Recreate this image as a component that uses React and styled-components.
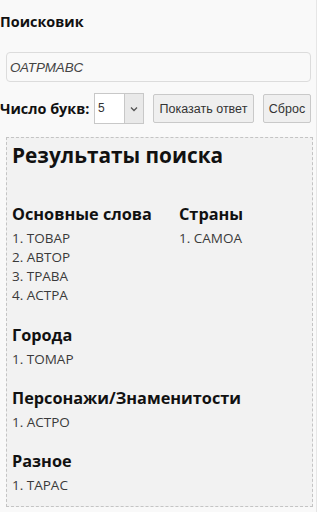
import React from "react";
import styled, { createGlobalStyle } from "styled-components";

const Global = createGlobalStyle`
  html, body { margin: 0; padding: 0; background: #ffffff; }
  body { font-family: "Open Sans", "Liberation Sans", sans-serif; }
`;

const Page = styled.div`
  width: 317px;
  min-height: 512px;
  background: #f9f9f9;
  border-right: 1px solid #e6e6e6;
  box-sizing: border-box;
  padding: 12px 0 0 0;
`;

const Title = styled.h1`
  margin: 0;
  font-size: 14.4px;
  font-weight: 700;
  color: #111;
  line-height: 20px;
`;

const SearchInput = styled.input`
  display: block;
  box-sizing: border-box;
  width: 305px;
  height: 30px;
  margin: 20px 0 0 6px;
  padding: 0 3px;
  border: 1px solid #dcdcdc;
  border-radius: 4px;
  background: #f9f9f9;
  font-family: "Liberation Sans", Arial, sans-serif;
  font-style: italic;
  font-size: 13.4px;
  color: #444;
  outline: none;
`;

const Controls = styled.div`
  display: flex;
  align-items: center;
  margin-top: 11px;
  height: 31px;
`;

const Label = styled.span`
  width: 94px;
  font-size: 14.4px;
  font-weight: 700;
  color: #111;
  white-space: nowrap;
`;

const Select = styled.div`
  display: flex;
  box-sizing: border-box;
  width: 50px;
  height: 31px;
  border: 1px solid #c8c8c8;
  background: #fff;
  margin-right: 9px;
`;

const SelectValue = styled.span`
  flex: 1;
  padding-left: 3px;
  font-family: "Liberation Sans", Arial, sans-serif;
  font-size: 12px;
  line-height: 29px;
  color: #333;
`;

const SelectArrow = styled.span`
  width: 18px;
  display: flex;
  align-items: center;
  justify-content: center;
  background: #e9e9e9;
  border-left: 1px solid #c8c8c8;
`;

const Button = styled.button`
  box-sizing: border-box;
  height: 29px;
  width: ${(p) => p.$w}px;
  padding: 0;
  margin-right: ${(p) => p.$gap || 0}px;
  border: 1px solid #c9c9c9;
  border-radius: 2px;
  background: #efefef;
  font-family: "Liberation Sans", Arial, sans-serif;
  font-size: 12.5px;
  color: #333;
  cursor: pointer;
`;

const Results = styled.section`
  box-sizing: border-box;
  width: 307px;
  margin: 13px 0 0 6px;
  padding: 3px 5px 11px 5px;
  border: 1px dashed #c4c4c4;
  background: #f2f2f2;
`;

const ResultsTitle = styled.h2`
  margin: 0;
  font-size: 20.8px;
  font-weight: 700;
  color: #111;
  line-height: 28px;
`;

const Columns = styled.div`
  display: grid;
  grid-template-columns: 167px 1fr;
  margin-top: 33px;
  margin-bottom: 18px;
`;

const Group = styled.div`
  margin-bottom: ${(p) => p.$mb ?? 17}px;
`;

const GroupTitle = styled.h3`
  margin: 0 0 3px 0;
  font-size: 16.3px;
  font-weight: 700;
  color: #111;
  line-height: 24px;
`;

const List = styled.ol`
  margin: 0;
  padding: 0;
  list-style: none;
`;

const Item = styled.li`
  font-size: 13.5px;
  line-height: 19px;
  color: #3a3a3a;
`;

const Chevron = () => (
  <svg width="8" height="6" viewBox="0 0 8 6">
    <path d="M1 1.5 L4 4.5 L7 1.5" fill="none" stroke="#555" strokeWidth="1.3" />
  </svg>
);

const groups = {
  main: ["ТОВАР", "АВТОР", "ТРАВА", "АСТРА"],
  countries: ["САМОА"],
  cities: ["ТОМАР"],
  people: ["АСТРО"],
  misc: ["ТАРАС"],
};

const Items = ({ words }) => (
  <List>
    {words.map((w, i) => (
      <Item key={w}>{`${i + 1}. ${w}`}</Item>
    ))}
  </List>
);

export default function App() {
  return (
    <>
      <Global />
      <Page>
        <Title>Поисковик</Title>
        <SearchInput defaultValue="ОАТРМАВС" />
        <Controls>
          <Label>Число букв:</Label>
          <Select>
            <SelectValue>5</SelectValue>
            <SelectArrow>
              <Chevron />
            </SelectArrow>
          </Select>
          <Button $w={101} $gap={9}>Показать ответ</Button>
          <Button $w={48}>Сброс</Button>
        </Controls>
        <Results>
          <ResultsTitle>Результаты поиска</ResultsTitle>
          <Columns>
            <Group $mb={0}>
              <GroupTitle>Основные слова</GroupTitle>
              <Items words={groups.main} />
            </Group>
            <Group $mb={0}>
              <GroupTitle>Страны</GroupTitle>
              <Items words={groups.countries} />
            </Group>
          </Columns>
          <Group>
            <GroupTitle>Города</GroupTitle>
            <Items words={groups.cities} />
          </Group>
          <Group>
            <GroupTitle>Персонажи/Знаменитости</GroupTitle>
            <Items words={groups.people} />
          </Group>
          <Group $mb={0}>
            <GroupTitle>Разное</GroupTitle>
            <Items words={groups.misc} />
          </Group>
        </Results>
      </Page>
    </>
  );
}
